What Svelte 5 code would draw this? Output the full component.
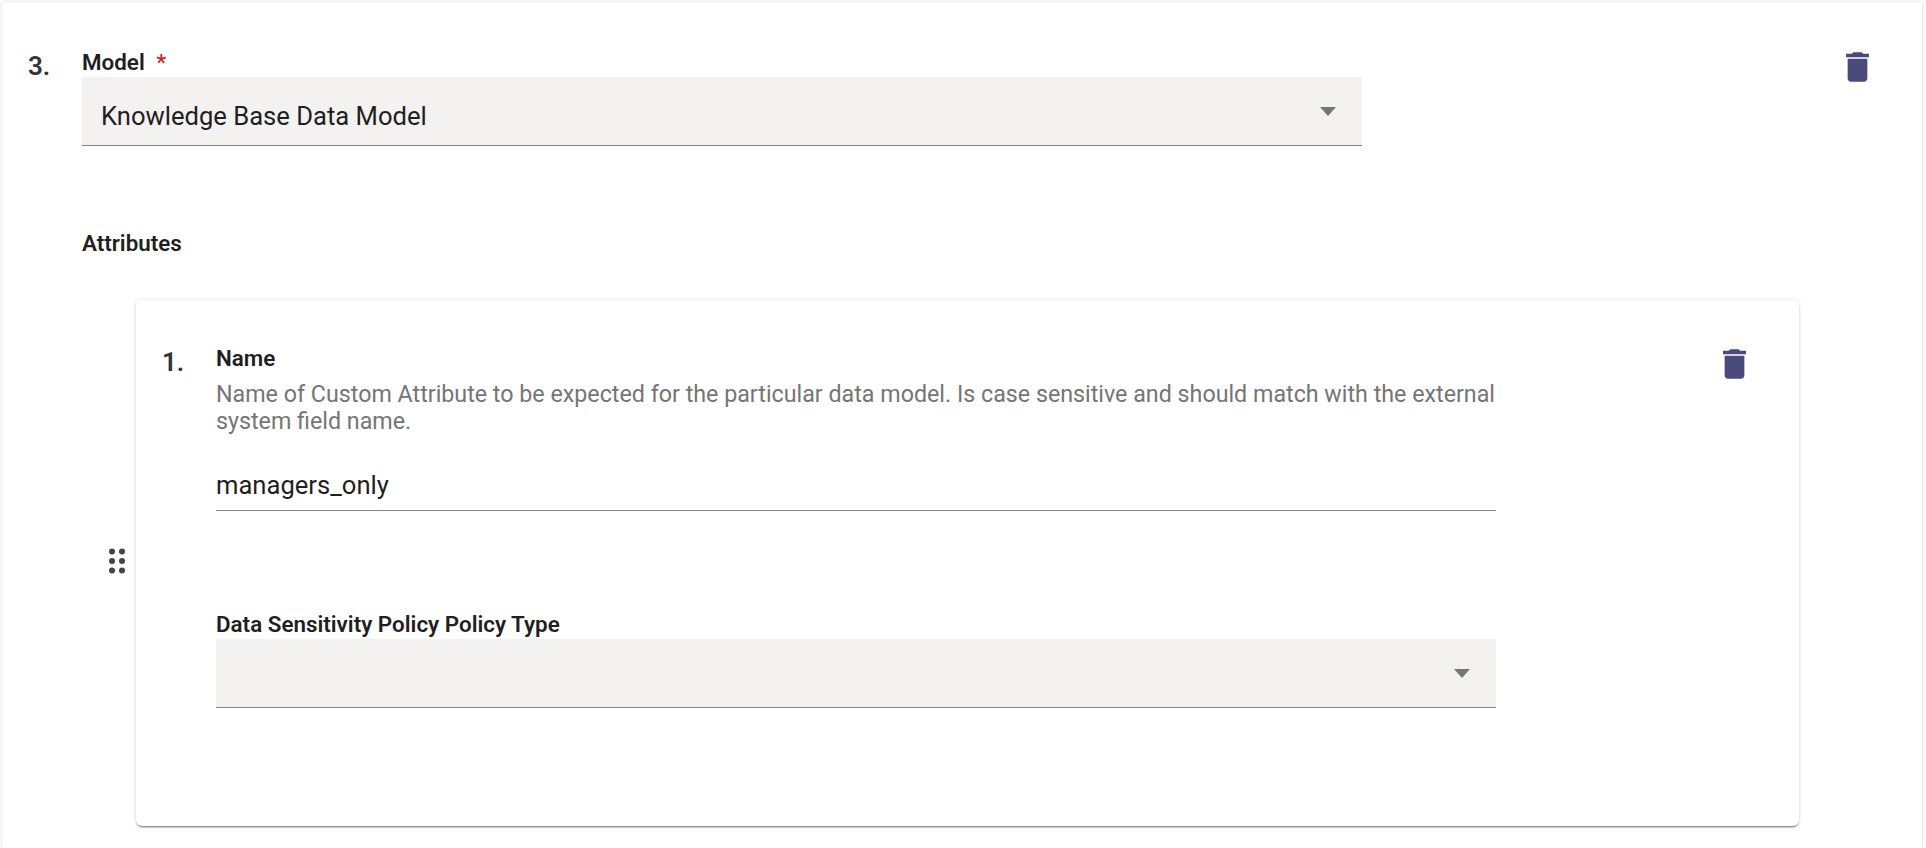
<script lang="ts">
  const description =
    'Name of Custom Attribute to be expected for the particular data model. Is case sensitive and should match with the external system field name.';
</script>

{#snippet trash()}
  <svg class="trash" viewBox="5 3 14 18" aria-hidden="true">
    <path d="M6 19c0 1.1.9 2 2 2h8c1.1 0 2-.9 2-2V7H6v12zM19 4h-3.5l-1-1h-5l-1 1H5v2h14V4z" />
  </svg>
{/snippet}

{#snippet select(value: string)}
  <div class="select">
    <span>{value}</span>
    <i class="arrow"></i>
  </div>
{/snippet}

<div class="panel">
  <div class="item">
    <div class="num">3.</div>
    <div class="body">
      <div class="label">Model <span class="req">*</span></div>
      {@render select('Knowledge Base Data Model')}

      <div class="attrs-title">Attributes</div>

      <div class="attr-row">
        <div class="handle">
          <svg viewBox="0 0 18 27" width="18" height="27" aria-hidden="true">
            {#each [3.5, 13, 22.5] as cy}
              <circle cx="4" {cy} r="3" />
              <circle cx="14" {cy} r="3" />
            {/each}
          </svg>
        </div>
        <div class="card">
          <div class="item">
            <div class="num">1.</div>
            <div class="body">
              <div class="label">Name</div>
              <div class="desc">{description}</div>
              <div class="input">managers_only</div>
              <div class="label policy">Data Sensitivity Policy Policy Type</div>
              {@render select('')}
            </div>
            {@render trash()}
          </div>
        </div>
      </div>
    </div>
    {@render trash()}
  </div>
</div>

<style>
  :global(body) {
    overflow: hidden;
    background: #fff;
  }

  .panel {
    margin: 2px 4px 0 2px;
    height: 846px;
    padding: 46px 53px 0 26px;
    box-sizing: border-box;
    background: #fff;
    box-shadow: 0 0 3px rgba(0, 0, 0, 0.18);
    font-family: Roboto, sans-serif;
    color: #1f1f1f;
  }

  .item {
    display: flex;
    align-items: flex-start;
  }

  .num {
    flex: 0 0 54px;
    margin-top: 2px;
    font-size: 26px;
    font-weight: 600;
    line-height: 32px;
    color: #333;
  }

  .body {
    flex: 1;
    min-width: 0;
  }

  .trash {
    flex: none;
    width: 23px;
    height: 30px;
    margin-top: 4px;
    fill: #4b4a7d;
  }

  .card .trash {
    margin-top: 5px;
  }

  .label {
    font-size: 22.4px;
    font-weight: 600;
    line-height: 29px;
  }

  .req {
    margin-left: 6px;
    color: #c62828;
    font-weight: 500;
  }

  .select {
    display: flex;
    align-items: center;
    justify-content: space-between;
    width: 1280px;
    height: 69px;
    padding: 0 26px 0 19px;
    box-sizing: border-box;
    background: #f3f2f1;
    border-bottom: 1px solid #858585;
    font-size: 25.6px;
  }

  .select span {
    margin-top: 9px;
  }

  .arrow {
    width: 0;
    height: 0;
    margin-top: 1px;
    border-left: 8px solid transparent;
    border-right: 8px solid transparent;
    border-top: 9px solid #757575;
  }

  .attrs-title {
    margin-top: 83px;
    font-size: 22.4px;
    font-weight: 600;
    line-height: 29px;
  }

  .attr-row {
    display: flex;
    align-items: center;
    margin-top: 42px;
  }

  .handle {
    flex: 0 0 54px;
    display: flex;
    margin-top: -3px;
    padding-left: 26px;
    box-sizing: border-box;
    fill: #444;
  }

  .card {
    width: 1663px;
    height: 526px;
    padding: 44px 53px 0 26px;
    box-sizing: border-box;
    background: #fff;
    border-radius: 6px;
    box-shadow:
      0 0 4px rgba(0, 0, 0, 0.14),
      0 2px 2px -1px rgba(0, 0, 0, 0.55);
  }

  .desc {
    width: 1288px;
    margin-top: 8px;
    font-size: 23.25px;
    line-height: 27px;
    color: #757575;
  }

  .input {
    width: 1280px;
    margin-top: 34px;
    padding-bottom: 8px;
    border-bottom: 1px solid #858585;
    font-size: 25.6px;
    line-height: 33px;
  }

  .policy {
    margin-top: 99px;
  }
</style>
